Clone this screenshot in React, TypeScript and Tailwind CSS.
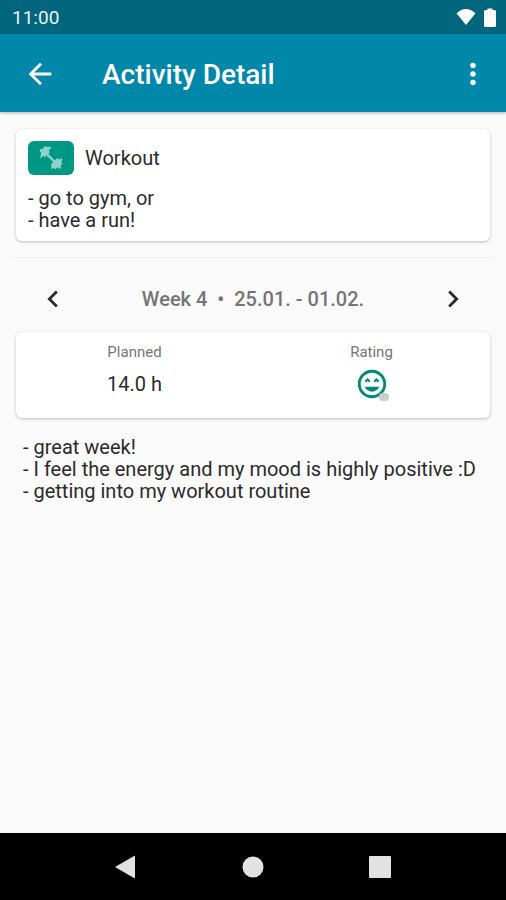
import { MdOutlineSentimentVerySatisfied, MdArrowBack, MdMoreVert, MdChevronLeft, MdChevronRight } from "react-icons/md";

function StatusBar() {
  return (
    <div className="flex h-[34px] items-center justify-between bg-[#00657d] pr-[10px] pl-3 text-[19px] text-[#e8f2f4]">
      <span className="pt-[2px]">11:00</span>
      <div className="flex items-center gap-2 text-white">
        <svg width="20" height="18" viewBox="0 0 21 18" fill="currentColor" aria-hidden="true">
          <path d="M10.500 17.500 L0.500 5 Q10.500 -4 20.500 5 Z" />
        </svg>
        <svg width="12" height="19" viewBox="0 0 12 19" fill="currentColor" aria-hidden="true">
          <path d="M3.500 0.500h5v1.500h2q1.500 0 1.500 1.500v14q0 1.500-1.500 1.500h-9q-1.500 0-1.500-1.500v-14q0-1.500 1.500-1.500h2z" />
        </svg>
      </div>
    </div>
  );
}

function AppBar() {
  return (
    <header className="z-10 flex h-[78px] items-center bg-[#0087aa] px-4 pt-[2px] text-white shadow-[0_1px_3px_rgba(0,0,0,0.3)]">
      <button type="button" aria-label="Back" className="grid size-12 place-items-center">
        <MdArrowBack className="size-[34px]" />
      </button>
      <h1 className="flex-1 pt-[2px] pl-[38px] text-[28px] leading-9 font-medium">Activity Detail</h1>
      <button type="button" aria-label="More options" className="grid h-12 w-[34px] place-items-center">
        <MdMoreVert className="size-[34px]" />
      </button>
    </header>
  );
}

function ActivityCard() {
  return (
    <section className="mx-4 rounded-md bg-white px-3 pt-3 pb-[10px] shadow-[0_1px_3px_rgba(0,0,0,0.25)]">
      <div className="flex items-center gap-[11px]">
        <div className="grid h-[34px] w-[46px] place-items-center rounded-md bg-[#009884]">
          <svg width="24" height="24" viewBox="0 0 22 22" className="text-[#8dd3c9]" fill="currentColor" aria-hidden="true">
            <path d="M1 3 L3.500 2.500 L5 0.500 L11.500 1 L9 4.500 L10 6 L8.500 7 L14.500 13 L17 11 L18.500 12.500 L20.500 11 L21.500 12.500 L20.500 14.500 L21.500 16.500 L19.500 18 L20.500 20 L18.500 21 L17 19.500 L15 21.500 L13.500 20 L11 21 L11.500 18.500 L11 17 L13 14.500 L6.500 8.500 L5.500 10.500 L4 9 L1 11.500 L2 6 L0.500 5 Z" />
          </svg>
        </div>
        <h2>Workout</h2>
      </div>
      <p className="pt-3 whitespace-pre-line">{"- go to gym, or\n- have a run!"}</p>
    </section>
  );
}

function WeekPicker() {
  return (
    <nav className="flex h-[74px] items-center justify-between px-9 pt-2">
      <button type="button" aria-label="Previous week" className="grid size-[34px] place-items-center">
        <MdChevronLeft className="size-[34px]" />
      </button>
      <span className="font-medium whitespace-pre text-[#757575]">{"Week 4  •  25.01. - 01.02."}</span>
      <button type="button" aria-label="Next week" className="grid size-[34px] place-items-center">
        <MdChevronRight className="size-[34px]" />
      </button>
    </nav>
  );
}

function SummaryCard() {
  return (
    <section className="mx-4 grid h-[86px] grid-cols-2 rounded-md bg-white pt-[9px] text-center shadow-[0_1px_3px_rgba(0,0,0,0.25)]">
      <div>
        <h3 className="text-[15px] leading-[22px] text-[#757575]">Planned</h3>
        <p className="flex h-[42px] items-center justify-center">14.0 h</p>
      </div>
      <div>
        <h3 className="text-[15px] leading-[22px] text-[#757575]">Rating</h3>
        <div className="flex h-[42px] items-center justify-center">
          <span className="relative">
            <MdOutlineSentimentVerySatisfied className="size-[34px] text-[#00897b]" role="img" aria-label="Very satisfied" />
            <span className="absolute right-0 bottom-0 h-2 w-[10px] rounded-sm bg-[#cccccc]" />
          </span>
        </div>
      </div>
    </section>
  );
}

function SystemNav() {
  return (
    <footer className="flex h-[67px] items-center justify-center gap-[105px] bg-black text-[#e2e2e2]">
      <button type="button" aria-label="System back">
        <svg width="22" height="24" viewBox="0 0 22 24" fill="currentColor">
          <path d="M0 12 19 1q1-.5 1 .5v21q0 1-1 .5z" />
        </svg>
      </button>
      <button type="button" aria-label="Home">
        <svg width="22" height="22" viewBox="0 0 22 22" fill="currentColor">
          <circle cx="11" cy="11" r="10.500" />
        </svg>
      </button>
      <button type="button" aria-label="Recent apps">
        <svg width="22" height="22" viewBox="0 0 22 22" fill="currentColor">
          <rect width="22" height="22" rx="1" />
        </svg>
      </button>
    </footer>
  );
}

export default function App() {
  return (
    <div className="flex min-h-screen flex-col bg-[#fafafa] font-['Roboto',sans-serif] text-xl leading-[22px] text-[#2b2b2b]">
      <StatusBar />
      <AppBar />
      <main className="flex-1 pt-[17px]">
        <ActivityCard />
        <hr className="mx-3 mt-4 border-[#eeeeee]" />
        <WeekPicker />
        <SummaryCard />
        <p className="px-[23px] pt-[18px] whitespace-pre-line">
          {"- great week!\n- I feel the energy and my mood is highly positive :D\n- getting into my workout routine"}
        </p>
      </main>
      <SystemNav />
    </div>
  );
}
